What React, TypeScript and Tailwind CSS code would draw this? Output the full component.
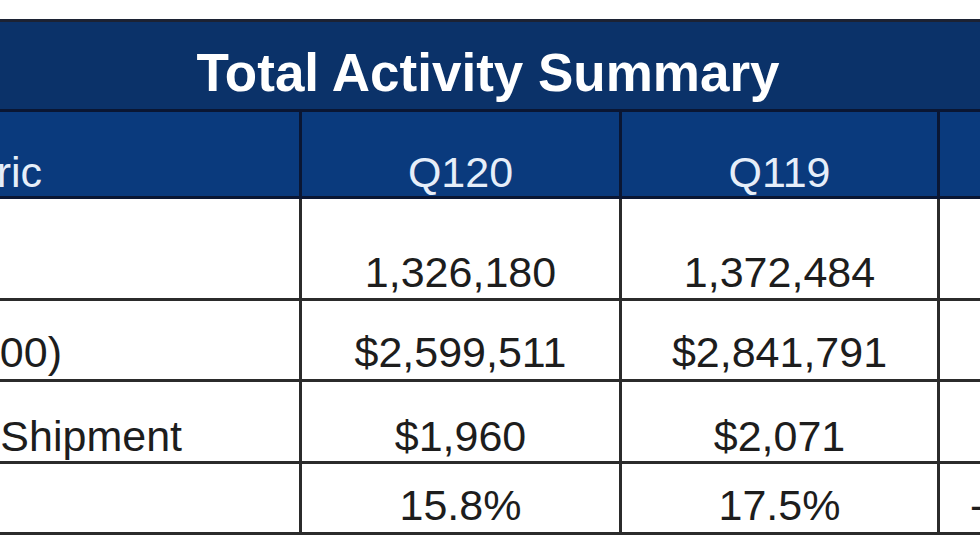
const NAVY_TITLE = "bg-[#0b3269]";

interface Row {
  label: string;
  labelPad: string;
  q120: string;
  q119: string;
  change: string;
  height: string;
  pad: string;
}

const rows: Row[] = [
  { label: "Total Shipments", labelPad: "pr-[400px]", q120: "1,326,180", q119: "1,372,484", change: "-3.4%", height: "h-[102px]", pad: "pb-[4px]" },
  { label: "Total Spend ($000)", labelPad: "pr-[237px]", q120: "$2,599,511", q119: "$2,841,791", change: "-8.5%", height: "h-[81px]", pad: "pb-[5px]" },
  { label: "Avg. Cost per Shipment", labelPad: "pr-[117px]", q120: "$1,960", q119: "$2,071", change: "-5.4%", height: "h-[82px]", pad: "pb-[3px]" },
  { label: "Accessorial %", labelPad: "pr-[400px]", q120: "15.8%", q119: "17.5%", change: "-1.7 pts", height: "h-[68px]", pad: "pb-[5px]" },
];

const grid = "grid grid-cols-[648px_320px_318px_382px]";

export default function App() {
  return (
    <div
      className="w-[980px] h-[552px] overflow-hidden bg-white pt-[19px]"
      style={{ fontFamily: '"Liberation Sans", Arial, sans-serif' }}
    >
      <div className="-ml-[346px] w-[1668px] border-b-[3px] border-[#2b2b2b]">
        {/* title band */}
        <div
          className={`${NAVY_TITLE} h-[93px] border-t-[3px] border-b-[3px] border-t-[#1c2233] border-b-[#0a1633] flex items-end justify-center pb-[10px]`}
        >
          <span className="text-[53px] leading-none font-bold text-white">Total Activity Summary</span>
        </div>

        {/* header row */}
        <div className={`${grid} h-[87px] bg-[#0a3a7d] border-b-[3px] border-[#0a1633]`}>
          <div className="border-r-[3px] border-[#0a1633] flex items-end justify-center pb-[2px] pl-[14px]">
            <span className="text-[43px] leading-none text-[#e6eef9]">Metric</span>
          </div>
          <div className="border-r-[3px] border-[#0a1633] flex items-end justify-center pb-[2px]">
            <span className="text-[43px] leading-none text-[#e6eef9]">Q120</span>
          </div>
          <div className="border-r-[3px] border-[#0a1633] flex items-end justify-center pb-[2px]">
            <span className="text-[43px] leading-none text-[#e6eef9]">Q119</span>
          </div>
          <div className="flex items-end justify-center pb-[2px]">
            <span className="text-[43px] leading-none text-[#e6eef9]">Change</span>
          </div>
        </div>

        {/* body rows */}
        {rows.map((r, i) => (
          <div
            key={r.label}
            className={`${grid} ${r.height} ${i < rows.length - 1 ? "border-b-[3px] border-[#2b2b2b]" : ""} text-[43px] leading-none text-[#1d1d1d]`}
          >
            <div className={`border-r-[3px] border-[#2b2b2b] flex items-end justify-end whitespace-nowrap ${r.pad} ${r.labelPad}`}>
              {r.label}
            </div>
            <div className={`border-r-[3px] border-[#2b2b2b] flex items-end justify-center ${r.pad}`}>
              {r.q120}
            </div>
            <div className={`border-r-[3px] border-[#2b2b2b] flex items-end justify-center ${r.pad}`}>
              {r.q119}
            </div>
            <div
              className={`flex items-end whitespace-nowrap ${r.pad} ${i === rows.length - 1 ? "justify-start pl-[30px]" : "justify-center"}`}
            >
              {r.change}
            </div>
          </div>
        ))}
      </div>
    </div>
  );
}
